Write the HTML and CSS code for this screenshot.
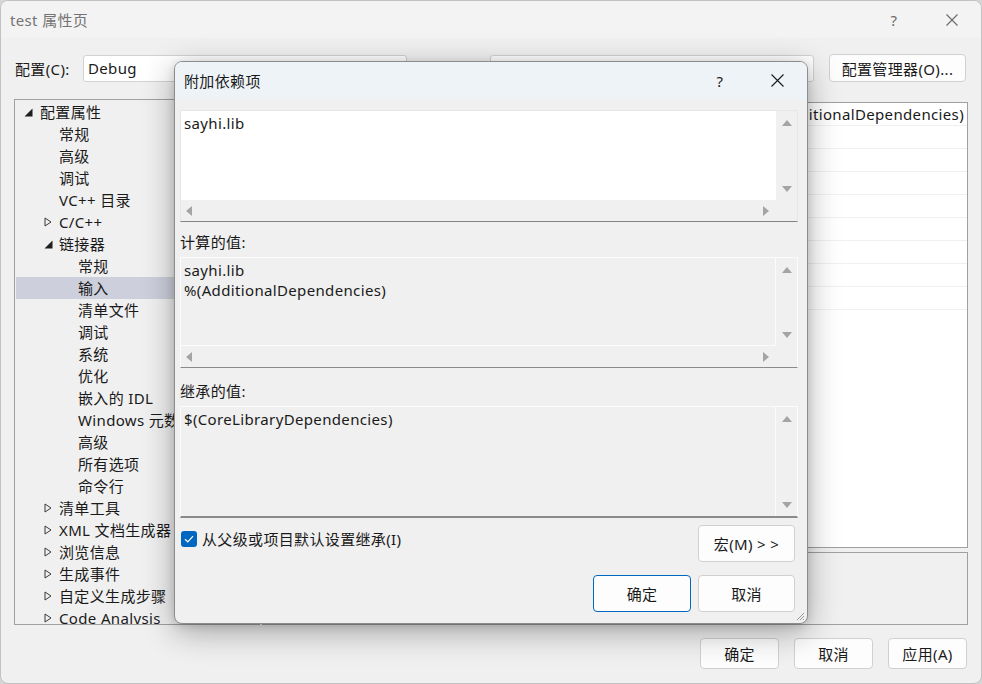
FILE: index.html
```html
<!DOCTYPE html>
<html lang="zh-CN">
<head>
  <meta charset="UTF-8">
  <title>test 属性页</title>
  <link rel="stylesheet" href="styles.css">
</head>
<body>
  <div class="window">
    <!-- Title bar -->
    <div class="titlebar">
      <span class="title">test 属性页</span>
      <span class="tb-help">?</span>
      <span class="tb-close">
        <svg width="12" height="12" viewBox="0 0 12 12"><path d="M0.5 0.5 L11.5 11.5 M11.5 0.5 L0.5 11.5" stroke="#6a6a6a" stroke-width="1.1" fill="none"/></svg>
      </span>
    </div>

    <!-- Configuration / platform row -->
    <div class="config-row">
      <span class="config-label">配置(C):</span>
      <div class="combo combo-config">Debug</div>
      <div class="combo combo-platform"></div>
      <button class="btn btn-manager">配置管理器(O)...</button>
    </div>

    <div class="main">
      <!-- Property tree -->
      <div class="tree">
        <div class="node lvl0"><span class="tw"><svg width="9" height="9" viewBox="0 0 9 9"><path d="M8.5 0.5 L8.5 8.5 L0.5 8.5 Z" fill="#1f1f1f"/></svg></span>配置属性</div>
        <div class="node lvl1">常规</div>
        <div class="node lvl1">高级</div>
        <div class="node lvl1">调试</div>
        <div class="node lvl1">VC++ 目录</div>
        <div class="node lvl1"><span class="tw"><svg width="8" height="10" viewBox="0 0 8 10"><path d="M1 1 L7 5 L1 9 Z" fill="none" stroke="#3a3a3a" stroke-width="1"/></svg></span>C/C++</div>
        <div class="node lvl1"><span class="tw"><svg width="9" height="9" viewBox="0 0 9 9"><path d="M8.5 0.5 L8.5 8.5 L0.5 8.5 Z" fill="#1f1f1f"/></svg></span>链接器</div>
        <div class="node lvl2">常规</div>
        <div class="node lvl2 selected">输入</div>
        <div class="node lvl2">清单文件</div>
        <div class="node lvl2">调试</div>
        <div class="node lvl2">系统</div>
        <div class="node lvl2">优化</div>
        <div class="node lvl2">嵌入的 IDL</div>
        <div class="node lvl2">Windows 元数据</div>
        <div class="node lvl2">高级</div>
        <div class="node lvl2">所有选项</div>
        <div class="node lvl2">命令行</div>
        <div class="node lvl1"><span class="tw"><svg width="8" height="10" viewBox="0 0 8 10"><path d="M1 1 L7 5 L1 9 Z" fill="none" stroke="#3a3a3a" stroke-width="1"/></svg></span>清单工具</div>
        <div class="node lvl1"><span class="tw"><svg width="8" height="10" viewBox="0 0 8 10"><path d="M1 1 L7 5 L1 9 Z" fill="none" stroke="#3a3a3a" stroke-width="1"/></svg></span>XML 文档生成器</div>
        <div class="node lvl1"><span class="tw"><svg width="8" height="10" viewBox="0 0 8 10"><path d="M1 1 L7 5 L1 9 Z" fill="none" stroke="#3a3a3a" stroke-width="1"/></svg></span>浏览信息</div>
        <div class="node lvl1"><span class="tw"><svg width="8" height="10" viewBox="0 0 8 10"><path d="M1 1 L7 5 L1 9 Z" fill="none" stroke="#3a3a3a" stroke-width="1"/></svg></span>生成事件</div>
        <div class="node lvl1"><span class="tw"><svg width="8" height="10" viewBox="0 0 8 10"><path d="M1 1 L7 5 L1 9 Z" fill="none" stroke="#3a3a3a" stroke-width="1"/></svg></span>自定义生成步骤</div>
        <div class="node lvl1"><span class="tw"><svg width="8" height="10" viewBox="0 0 8 10"><path d="M1 1 L7 5 L1 9 Z" fill="none" stroke="#3a3a3a" stroke-width="1"/></svg></span>Code Analysis</div>
      </div>

      <!-- Property grid + description -->
      <div class="right">
        <div class="grid">
          <div class="grid-row"><span class="prop-value">sayhi.lib;%(AdditionalDependencies)</span></div>
          <div class="grid-row"></div>
          <div class="grid-row"></div>
          <div class="grid-row"></div>
          <div class="grid-row"></div>
          <div class="grid-row"></div>
          <div class="grid-row"></div>
          <div class="grid-row"></div>
          <div class="grid-row"></div>
        </div>
        <div class="desc"></div>
      </div>
    </div>

    <div class="footer">
      <button class="btn btn-footer">确定</button>
      <button class="btn btn-footer">取消</button>
      <button class="btn btn-footer">应用(A)</button>
    </div>

    <!-- Modal dialog -->
    <div class="dialog">
      <div class="dlg-titlebar">
        <span class="dlg-title">附加依赖项</span>
        <span class="dlg-help">?</span>
        <span class="dlg-close">
          <svg width="13" height="13" viewBox="0 0 13 13"><path d="M0.5 0.5 L12.5 12.5 M12.5 0.5 L0.5 12.5" stroke="#1a1a1a" stroke-width="1.1" fill="none"/></svg>
        </span>
      </div>

      <div class="dlg-body">
        <div class="textbox editable">
          <div class="tb-content">sayhi.lib</div>
          <div class="vscroll">
            <svg width="10" height="6" viewBox="0 0 10 6"><path d="M0 6 L5 0 L10 6 Z" fill="#a4a4a4"/></svg>
            <svg width="10" height="6" viewBox="0 0 10 6"><path d="M0 0 L10 0 L5 6 Z" fill="#a4a4a4"/></svg>
          </div>
          <div class="hscroll">
            <svg width="6" height="10" viewBox="0 0 6 10"><path d="M6 0 L6 10 L0 5 Z" fill="#a4a4a4"/></svg>
            <svg width="6" height="10" viewBox="0 0 6 10"><path d="M0 0 L0 10 L6 5 Z" fill="#a4a4a4"/></svg>
          </div>
          <div class="corner"></div>
        </div>

        <div class="field-label first-label">计算的值:</div>
        <div class="textbox readonly evaluated">
          <div class="tb-content">sayhi.lib<br>%(AdditionalDependencies)</div>
          <div class="vscroll">
            <svg width="10" height="6" viewBox="0 0 10 6"><path d="M0 6 L5 0 L10 6 Z" fill="#a4a4a4"/></svg>
            <svg width="10" height="6" viewBox="0 0 10 6"><path d="M0 0 L10 0 L5 6 Z" fill="#a4a4a4"/></svg>
          </div>
          <div class="hscroll">
            <svg width="6" height="10" viewBox="0 0 6 10"><path d="M6 0 L6 10 L0 5 Z" fill="#a4a4a4"/></svg>
            <svg width="6" height="10" viewBox="0 0 6 10"><path d="M0 0 L0 10 L6 5 Z" fill="#a4a4a4"/></svg>
          </div>
          <div class="corner"></div>
        </div>

        <div class="field-label second-label">继承的值:</div>
        <div class="textbox readonly inherited">
          <div class="tb-content">$(CoreLibraryDependencies)</div>
          <div class="vscroll">
            <svg width="10" height="6" viewBox="0 0 10 6"><path d="M0 6 L5 0 L10 6 Z" fill="#a4a4a4"/></svg>
            <svg width="10" height="6" viewBox="0 0 10 6"><path d="M0 0 L10 0 L5 6 Z" fill="#a4a4a4"/></svg>
          </div>
        </div>

        <div class="inherit-row">
          <label class="check">
            <span class="checkbox">
              <svg width="10" height="8" viewBox="0 0 10 8"><path d="M1 4.2 L3.8 6.8 L9 1.2" fill="none" stroke="#ffffff" stroke-width="1.2"/></svg>
            </span>
            从父级或项目默认设置继承(I)
          </label>
          <button class="btn btn-dlg">宏(M) &gt; &gt;</button>
        </div>

        <div class="dlg-buttons">
          <button class="btn btn-dlg btn-default">确定</button>
          <button class="btn btn-dlg">取消</button>
        </div>
      </div>

      <span class="grip">
        <svg width="10" height="10" viewBox="0 0 10 10"><path d="M9 2 L2 9 M9 5 L5 9 M9 8 L8 9" stroke="#9a9a9a" stroke-width="1" fill="none"/></svg>
      </span>
    </div>
  </div>
</body>
</html>
```

FILE: styles.css
```css
* {
  box-sizing: border-box;
}

html, body {
  margin: 0;
  padding: 0;
}

body {
  width: 982px;
  height: 684px;
  overflow: hidden;
  background: #d6d6d6;
  font-family: "Noto Sans", "Noto Sans CJK SC", sans-serif;
  font-size: 15px;
  letter-spacing: 0.35px;
  color: #1a1a1a;
}

button {
  font-family: inherit;
  font-size: 15px;
  letter-spacing: inherit;
  color: #1a1a1a;
}

/* Main property window */
.window {
  position: relative;
  width: 982px;
  height: 684px;
  background: #f0f0f0;
  border: 1px solid #c2c2c2;
  border-radius: 8px;
  overflow: hidden;
}

.titlebar {
  height: 37px;
  display: flex;
  align-items: center;
  padding-left: 9px;
  background: #f3f3f3;
}

.title {
  color: #737373;
  flex: 1;
}

.tb-help {
  color: #6a6a6a;
  width: 20px;
  text-align: center;
  margin-right: 42px;
}

.tb-close {
  display: flex;
  margin-right: 23px;
}

.config-row {
  display: flex;
  align-items: center;
  height: 28px;
  margin-top: 16px;
  padding-left: 14px;
}

.config-label {
  width: 68px;
}

.combo {
  height: 27px;
  width: 324px;
  background: #ffffff;
  border: 1px solid #d2d2d2;
  border-radius: 3px;
  padding-left: 4px;
  line-height: 25px;
}

.combo-platform {
  margin-left: 83px;
}

.btn {
  background: #fdfdfd;
  border: 1px solid #d0d0d0;
  border-radius: 4px;
  padding: 0;
  cursor: default;
}

.btn-manager {
  width: 137px;
  height: 28px;
  margin-left: 15px;
}

.main {
  display: flex;
  margin-top: 17px;
  padding: 0 13px;
}

/* Tree */
.tree {
  width: 246px;
  height: 526px;
  border: 1px solid #a0a0a0;
  background: #f0f0f0;
  padding: 1px 1px 0;
  overflow: hidden;
}

.node {
  position: relative;
  height: 22px;
  line-height: 22px;
  white-space: nowrap;
}

.lvl0 { padding-left: 24px; }
.lvl1 { padding-left: 43px; }
.lvl2 { padding-left: 62px; }

.node .tw {
  position: absolute;
  top: 0;
  height: 22px;
  display: flex;
  align-items: center;
}

.lvl0 .tw { left: 8px; }
.lvl1 .tw { left: 28px; }

.node.selected {
  background: #cdcfdc;
}

/* Property grid */
.right {
  flex: 1;
  margin-left: 2px;
  display: flex;
  flex-direction: column;
}

.grid {
  height: 446px;
  margin-top: 3px;
  background: #ffffff;
  border: 1px solid #a0a0a0;
}

.grid-row {
  display: flex;
  height: 23px;
  line-height: 22px;
  border-bottom: 1px solid #f0f0f0;
  white-space: nowrap;
  overflow: hidden;
}

.prop-value {
  flex: 1;
  text-align: right;
  padding-right: 3px;
}

.desc {
  margin-top: 4px;
  height: 73px;
  border: 1px solid #a0a0a0;
  background: #f0f0f0;
}

.footer {
  display: flex;
  justify-content: flex-end;
  gap: 15px;
  margin-top: 13px;
  padding-right: 14px;
}

.btn-footer {
  width: 79px;
  height: 31px;
}

/* Dialog */
.dialog {
  position: absolute;
  left: 173px;
  top: 60px;
  width: 634px;
  height: 563px;
  background: #f0f0f0;
  border: 1px solid #8c8c8c;
  border-radius: 8px;
  box-shadow: 0 8px 32px rgba(0, 0, 0, 0.32), 0 2px 8px rgba(0, 0, 0, 0.12);
  overflow: hidden;
}

.dlg-titlebar {
  height: 37px;
  display: flex;
  align-items: center;
  padding-left: 9px;
  background: #eef3f8;
}

.dlg-title {
  flex: 1;
}

.dlg-help {
  width: 20px;
  text-align: center;
  margin-right: 41px;
}

.dlg-close {
  display: flex;
  margin-right: 23px;
}

.dlg-body {
  padding: 11px 9px 0 5px;
}

.textbox {
  display: grid;
  grid-template-columns: 1fr 21px;
  grid-template-rows: 1fr 21px;
  border: 1px solid #e6e6e6;
}

.textbox.editable {
  height: 112px;
  border-bottom-color: #838383;
}

.textbox.editable .tb-content {
  background: #ffffff;
}

.textbox.readonly {
  border-color: #fbfbfb;
  border-bottom-color: #8a8a8a;
}

.evaluated {
  height: 111px;
}

.inherited {
  height: 112px;
  grid-template-rows: 1fr;
  border-bottom: 2px solid #0067c0;
}

.tb-content {
  padding: 2px 3px;
  line-height: 20px;
  white-space: nowrap;
  overflow: hidden;
}

.readonly .tb-content {
  border-right: 1px solid #fbfbfb;
}

.evaluated .tb-content {
  border-bottom: 1px solid #fbfbfb;
}

.vscroll {
  display: flex;
  flex-direction: column;
  justify-content: space-between;
  align-items: center;
  padding: 9px 0 8px;
}

.hscroll {
  display: flex;
  justify-content: space-between;
  align-items: center;
  padding: 0 7px 0 5px;
}

.field-label {
  line-height: 20px;
  margin-bottom: 5px;
}

.first-label {
  margin-top: 10px;
}

.second-label {
  margin-top: 13px;
}

.inherit-row {
  display: flex;
  justify-content: space-between;
  align-items: flex-start;
  margin-top: 7px;
  padding-right: 3px;
}

.check {
  display: flex;
  align-items: center;
  gap: 5px;
  margin-top: 5px;
  margin-left: 1px;
  line-height: 18px;
}

.checkbox {
  width: 16px;
  height: 16px;
  border-radius: 3px;
  background: #0067c0;
  display: flex;
  align-items: center;
  justify-content: center;
}

.btn-dlg {
  width: 97px;
  height: 37px;
}

.dlg-buttons {
  display: flex;
  justify-content: flex-end;
  gap: 7px;
  margin-top: 13px;
  padding-right: 3px;
}

.btn-default {
  width: 98px;
  border-color: #0067c0;
}

.grip {
  position: absolute;
  right: 2px;
  bottom: 2px;
  display: flex;
}
```
